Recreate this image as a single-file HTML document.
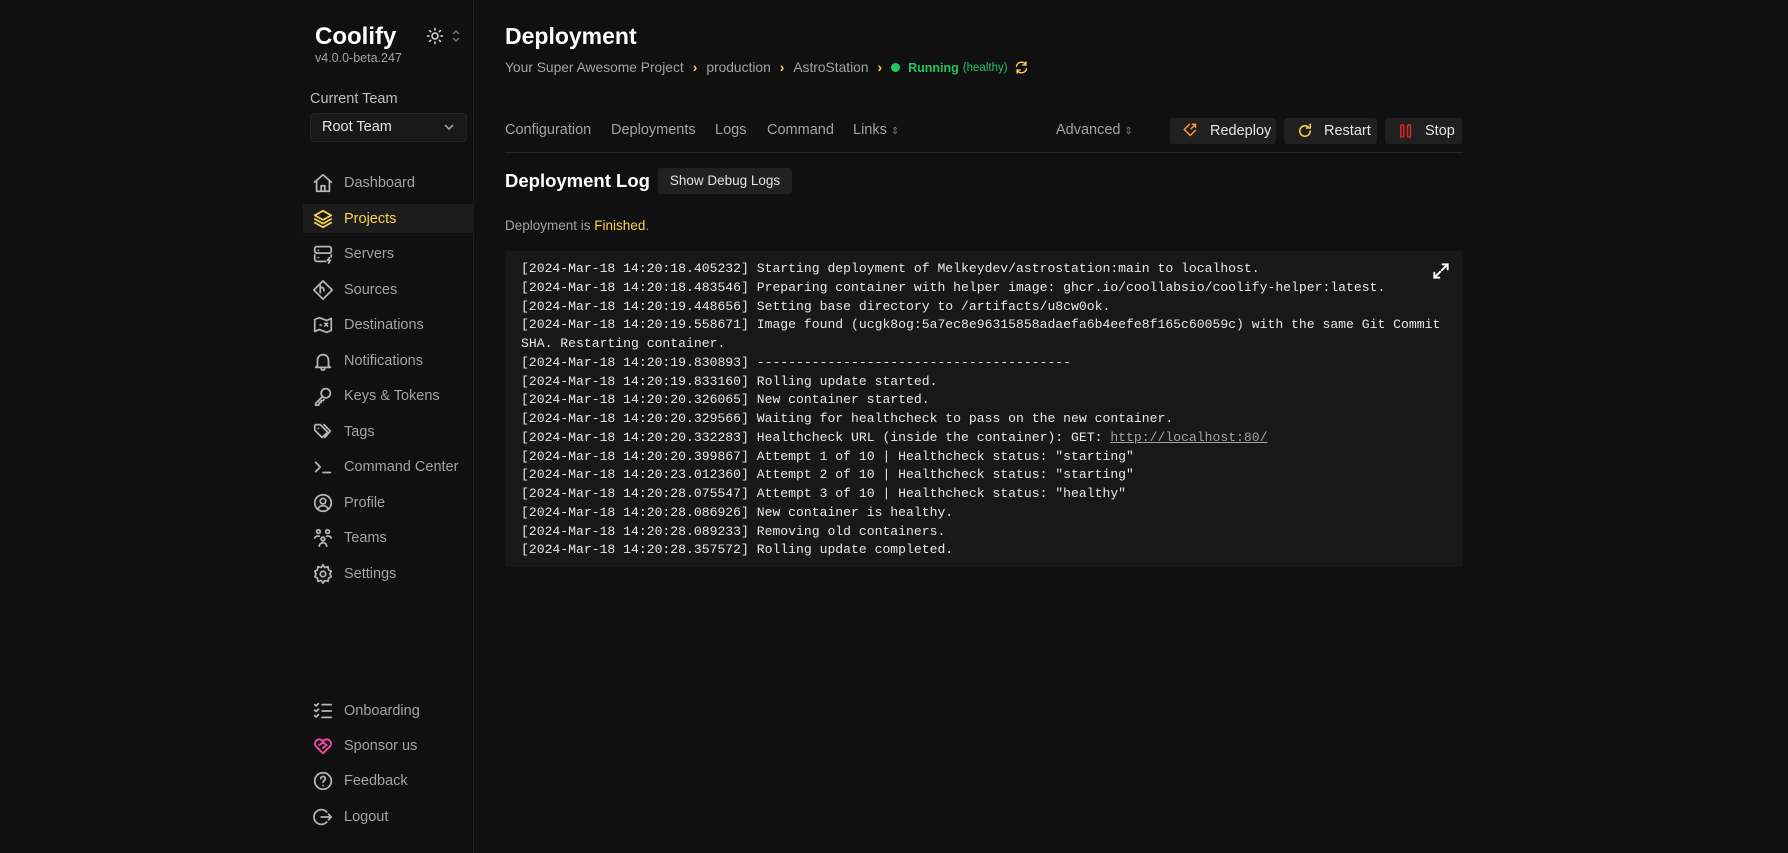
<!DOCTYPE html>
<html><head><meta charset="utf-8"><style>
*{margin:0;padding:0;box-sizing:border-box}
body{width:1788px;height:853px;background:#101010;font-family:"Liberation Sans",sans-serif;color:#d4d4d4;position:relative;overflow:hidden}
.a{position:absolute;white-space:nowrap}
.side{position:absolute;left:0;top:0;width:474px;height:853px;border-right:1px solid #1f1f1f}
.nav{position:absolute;left:310px;height:30px;display:flex;align-items:center;font-size:14.5px;color:#a3a3a3}
.nav svg{width:22px;height:22px;margin-left:2px;margin-right:10px;fill:none;stroke:#b5b5b5;stroke-width:1.9;stroke-linecap:round;stroke-linejoin:round}
.tab{position:absolute;top:122px;font-size:14.5px;color:#a3a3a3}
.btn{position:absolute;top:118px;height:26px;background:#202020;border-radius:3px;display:flex;align-items:center;font-size:14.5px;color:#e5e5e5;padding-left:12px}
.btn svg{width:18px;height:18px;margin-right:10px;fill:none;stroke-width:2;stroke-linecap:round;stroke-linejoin:round}
.log{position:absolute;left:505px;top:251px;width:958px;height:316px;background:#181818;border-radius:3px}
.log pre{position:absolute;left:16px;top:9px;font-family:"Liberation Mono",monospace;font-size:13.1px;line-height:18.75px;color:#e8e8e8}
.ch{color:#fcd452;margin:0 9px;font-weight:bold}
</style></head><body>
<div class="side"></div>
<div class="a" style="left:315px;top:23px;font-size:24px;font-weight:bold;color:#fff">Coolify</div>
<div class="a" style="left:315px;top:51px;font-size:12.5px;color:#a3a3a3">v4.0.0-beta.247</div>
<svg class="a" style="left:426px;top:27px" width="18" height="18" viewBox="0 0 24 24" fill="none" stroke="#ddd" stroke-width="2" stroke-linecap="round"><circle cx="12" cy="12" r="4"/><path d="M12 2v2M12 20v2M4.9 4.9l1.4 1.4M17.7 17.7l1.4 1.4M2 12h2M20 12h2M4.9 19.1l1.4-1.4M17.7 6.3l1.4-1.4"/></svg>
<svg class="a" style="left:451px;top:29px" width="10" height="14" viewBox="0 0 10 14" fill="none" stroke="#777" stroke-width="1.4"><path d="M2 5l3-3 3 3M2 9l3 3 3-3"/></svg>
<div class="a" style="left:310px;top:91px;font-size:14.5px;color:#bdbdbd">Current Team</div>
<div class="a" style="left:310px;top:113px;width:157px;height:29px;background:#181818;border:1px solid #232323;border-radius:4px"></div>
<div class="a" style="left:322px;top:119px;font-size:14.5px;color:#e5e5e5">Root Team</div>
<svg class="a" style="left:443px;top:122px" width="12" height="10" viewBox="0 0 12 10" fill="none" stroke="#aaa" stroke-width="1.5"><path d="M2 3l4 4 4-4"/></svg>
<div class="a" style="left:303px;top:204px;width:171px;height:29px;background:#1c1c1c"></div>

<div class="nav" style="top:168px"><svg viewBox="0 0 24 24"><path d="M3 11l9-8 9 8M5 9v12h14V9M10 21v-6h4v6"/></svg>Dashboard</div>
<div class="nav" style="top:204px;color:#fcd452"><svg viewBox="0 0 24 24" style="stroke:#fcd452"><path d="M12 3l9 5-9 5-9-5zM3 12l9 5 9-5M3 16l9 5 9-5"/></svg>Projects</div>
<div class="nav" style="top:239px"><svg viewBox="0 0 24 24"><rect x="3" y="4" width="18" height="7" rx="2"/><path d="M3 13v5a2 2 0 0 0 2 2h10M21 13v2M7 8h.01M7 16h.01M19 16l-2 3h3l-2 3"/></svg>Servers</div>
<div class="nav" style="top:275px"><svg viewBox="0 0 24 24"><path d="M12 2l10 10-10 10L2 12z M9 7l0 8M9 9c3 0 4 1 4 4"/></svg>Sources</div>
<div class="nav" style="top:310px"><svg viewBox="0 0 24 24"><path d="M3 6l5-2 8 3 5-2v13l-5 2-8-3-5 2zM9 12h1M14 10l3 3M17 10l-3 3"/></svg>Destinations</div>
<div class="nav" style="top:346px"><svg viewBox="0 0 24 24"><path d="M6 17V11a6 6 0 0 1 12 0v6l2 2H4zM10 20a2 2 0 0 0 4 0"/></svg>Notifications</div>
<div class="nav" style="top:381px"><svg viewBox="0 0 24 24"><circle cx="15" cy="9" r="5"/><path d="M11.5 12.5L4 20v2h3l1-1v-2h2v-2h2l1-1"/></svg>Keys &amp; Tokens</div>
<div class="nav" style="top:417px"><svg viewBox="0 0 24 24"><path d="M3 5v5l8 8 6-6-8-8H4zM13 4l7 7-6 7M7 8h.01"/></svg>Tags</div>
<div class="nav" style="top:452px"><svg viewBox="0 0 24 24"><path d="M4 7l5 5-5 5M12 18h8"/></svg>Command Center</div>
<div class="nav" style="top:488px"><svg viewBox="0 0 24 24"><circle cx="12" cy="12" r="9"/><circle cx="12" cy="10" r="3"/><path d="M6.5 18.5a6 6 0 0 1 11 0"/></svg>Profile</div>
<div class="nav" style="top:523px"><svg viewBox="0 0 24 24"><circle cx="7" cy="5" r="2"/><circle cx="17" cy="5" r="2"/><circle cx="12" cy="13" r="2"/><path d="M3 12a4 3 0 0 1 5-2M21 12a4 3 0 0 0-5-2M8 21a4 4 0 0 1 8 0"/></svg>Teams</div>
<div class="nav" style="top:559px"><svg viewBox="0 0 24 24"><circle cx="12" cy="12" r="3"/><path d="M12 2l2 3 3.5-1 .5 3.5L21 9l-1.5 3L21 15l-3 1.5-.5 3.5-3.5-1-2 3-2-3-3.5 1L6 16.5 3 15l1.5-3L3 9l3-1.5L6.5 4 10 5z"/></svg>Settings</div>

<div class="nav" style="top:696px"><svg viewBox="0 0 24 24"><path d="M3 5l1.5 1.5L7 4M3 11l1.5 1.5L7 10M3 17l1.5 1.5L7 16M11 5h10M11 12h10M11 19h10"/></svg>Onboarding</div>
<div class="nav" style="top:731px"><svg viewBox="0 0 24 24" style="stroke:#ec4899;stroke-width:2.2"><path d="M12 20l-8-8a4.5 4.5 0 0 1 8-5 4.5 4.5 0 0 1 8 5zM8 11l4-3 4 3-4 3"/></svg>Sponsor us</div>
<div class="nav" style="top:766px"><svg viewBox="0 0 24 24"><circle cx="12" cy="12" r="9"/><path d="M9.5 9.5a2.5 2.5 0 0 1 5 0c0 2-2.5 2-2.5 4M12 17h.01"/></svg>Feedback</div>
<div class="nav" style="top:802px"><svg viewBox="0 0 24 24"><path d="M16 6.5A8 8 0 1 0 16 17.5M10 12h11M18 9l3 3-3 3"/></svg>Logout</div>

<div class="a" style="left:505px;top:23px;font-size:23px;font-weight:bold;color:#fff">Deployment</div>
<div class="a" style="left:505px;top:60px;font-size:13.8px;color:#a3a3a3;display:flex;align-items:center">Your Super Awesome Project<span class="ch">›</span>production<span class="ch">›</span>AstroStation<span class="ch">›</span><span style="display:inline-block;width:9px;height:9px;border-radius:50%;background:#22c55e;margin-right:8px"></span><span style="color:#22c55e;font-weight:bold;font-size:12.5px">Running</span><span style="color:#22c55e;font-size:11.5px;margin-left:4px">(healthy)</span><svg style="margin-left:6px" width="15" height="15" viewBox="0 0 24 24" fill="none" stroke="#fcd452" stroke-width="2.2" stroke-linecap="round"><path d="M4 10a8 8 0 0 1 15-2M20 14a8 8 0 0 1-15 2M19 3v5h-5M5 21v-5h5"/></svg></div>

<div class="tab" style="left:505px">Configuration</div>
<div class="tab" style="left:611px">Deployments</div>
<div class="tab" style="left:715px">Logs</div>
<div class="tab" style="left:767px">Command</div>
<div class="tab" style="left:853px">Links <span style="font-size:10px;color:#777">⇕</span></div>
<div class="tab" style="left:1056px">Advanced <span style="font-size:10px;color:#777">⇕</span></div>
<div class="btn" style="left:1170px;width:106px"><svg viewBox="0 0 24 24" stroke="#fb923c"><path d="M10 3l-7 7 8 8 7-7M14 3h4v4M18 3l-6 6"/></svg>Redeploy</div>
<div class="btn" style="left:1284px;width:93px"><svg viewBox="0 0 24 24" stroke="#fcd452"><path d="M19 12a7 7 0 1 1-3-5.7M19 3v5h-5"/></svg>Restart</div>
<div class="btn" style="left:1385px;width:77px"><svg viewBox="0 0 24 24" stroke="#dc2626"><rect x="5" y="4" width="4" height="16" rx="1"/><rect x="14" y="4" width="4" height="16" rx="1"/></svg>Stop</div>
<div class="a" style="left:505px;top:152px;width:958px;height:1px;background:#262626"></div>

<div class="a" style="left:505px;top:170px;font-size:18.5px;font-weight:bold;color:#fff">Deployment Log</div>
<div class="a" style="left:658px;top:168px;width:134px;height:26px;background:#202020;border-radius:3px;font-size:13.5px;color:#e5e5e5;text-align:center;line-height:26px">Show Debug Logs</div>
<div class="a" style="left:505px;top:218px;font-size:13.5px;color:#a3a3a3">Deployment is <span style="color:#fcd452">Finished</span>.</div>

<div class="log"><pre>[2024-Mar-18 14:20:18.405232] Starting deployment of Melkeydev/astrostation:main to localhost.
[2024-Mar-18 14:20:18.483546] Preparing container with helper image: ghcr.io/coollabsio/coolify-helper:latest.
[2024-Mar-18 14:20:19.448656] Setting base directory to /artifacts/u8cw0ok.
[2024-Mar-18 14:20:19.558671] Image found (ucgk8og:5a7ec8e96315858adaefa6b4eefe8f165c60059c) with the same Git Commit
SHA. Restarting container.
[2024-Mar-18 14:20:19.830893] ----------------------------------------
[2024-Mar-18 14:20:19.833160] Rolling update started.
[2024-Mar-18 14:20:20.326065] New container started.
[2024-Mar-18 14:20:20.329566] Waiting for healthcheck to pass on the new container.
[2024-Mar-18 14:20:20.332283] Healthcheck URL (inside the container): GET: <span style="text-decoration:underline;color:#a3a3a3">http://localhost:80/</span>
[2024-Mar-18 14:20:20.399867] Attempt 1 of 10 | Healthcheck status: "starting"
[2024-Mar-18 14:20:23.012360] Attempt 2 of 10 | Healthcheck status: "starting"
[2024-Mar-18 14:20:28.075547] Attempt 3 of 10 | Healthcheck status: "healthy"
[2024-Mar-18 14:20:28.086926] New container is healthy.
[2024-Mar-18 14:20:28.089233] Removing old containers.
[2024-Mar-18 14:20:28.357572] Rolling update completed.</pre>
<svg style="position:absolute;left:926px;top:10px" width="20" height="20" viewBox="0 0 24 24" fill="none" stroke="#fff" stroke-width="2.4" stroke-linecap="round"><path d="M14 4h6v6M20 4l-7 7M10 20H4v-6M4 20l7-7"/></svg>
</div>
</body></html>
